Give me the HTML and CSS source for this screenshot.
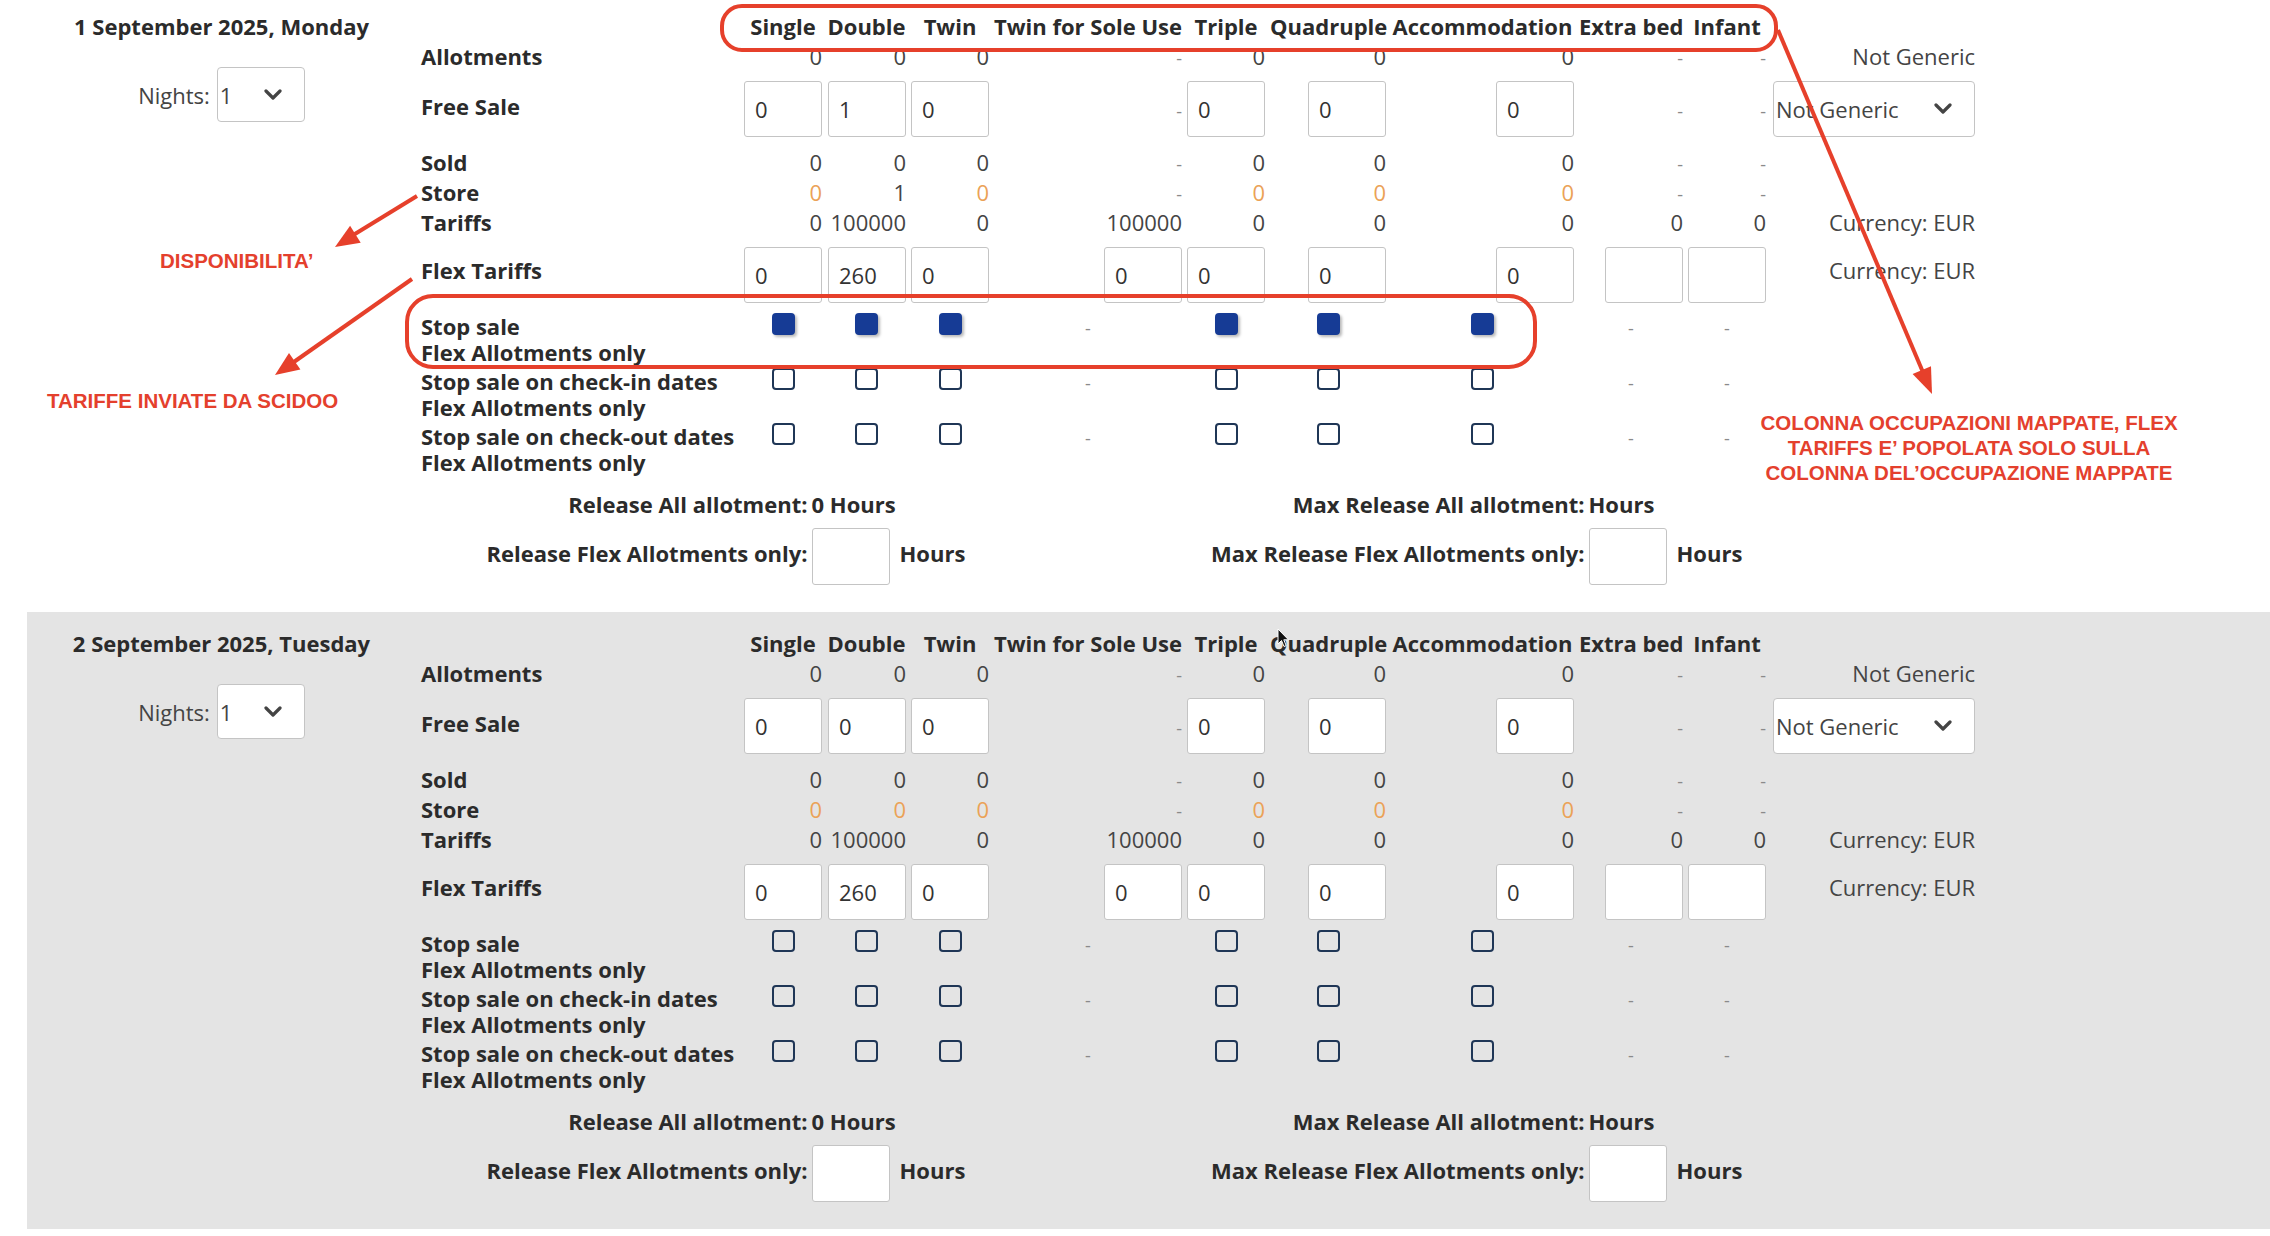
FILE: index.html
```html
<!DOCTYPE html>
<html lang="en">
<head>
<meta charset="UTF-8">
<title>Allotments</title>
<link rel="stylesheet" href="styles.css">
</head>
<body>
<div class="page">
<div class="days">

<!--first day-->
<div class="day">
	<div class="day-side">
		<div class="day-date">1 September 2025, Monday</div>
		<div class="nights">
			<span>Nights:</span>
			<div class="pick pick-nights"><span>1</span><svg class="chev" viewBox="0 0 18 12"><polyline points="2,2 9,9 16,2"/></svg></div>
		</div>
	</div>
	<div class="day-main">
		<table class="grid">
			<colgroup>
				<col class="c-lbl"><col class="c-sgl"><col class="c-dbl"><col class="c-twn"><col class="c-tsu"><col class="c-trp"><col class="c-qd"><col class="c-acc"><col class="c-ext"><col class="c-inf"><col class="c-side">
			</colgroup>
			<tr class="r-head">
				<th></th><th>Single</th><th>Double</th><th>Twin</th><th>Twin for Sole Use</th><th>Triple</th><th>Quadruple</th><th>Accommodation</th><th>Extra bed</th><th>Infant</th><th></th>
			</tr>
			<tr class="r-line">
				<td class="lbl">Allotments</td>
				<td class="n">0</td><td class="n">0</td><td class="n">0</td><td class="n"><span class="d">-</span></td><td class="n">0</td><td class="n">0</td><td class="n">0</td><td class="n"><span class="d">-</span></td><td class="n"><span class="d">-</span></td>
				<td class="n">Not Generic</td>
			</tr>
			<tr class="r-box">
				<td class="lbl">Free Sale</td>
				<td class="n"><input class="box" type="text" value="0"></td>
				<td class="n"><input class="box" type="text" value="1"></td>
				<td class="n"><input class="box" type="text" value="0"></td>
				<td class="n"><span class="d">-</span></td>
				<td class="n"><input class="box" type="text" value="0"></td>
				<td class="n"><input class="box" type="text" value="0"></td>
				<td class="n"><input class="box" type="text" value="0"></td>
				<td class="n"><span class="d">-</span></td><td class="n"><span class="d">-</span></td>
				<td class="n"><div class="pick pick-generic"><span>Not Generic</span><svg class="chev" viewBox="0 0 18 12"><polyline points="2,2 9,9 16,2"/></svg></div></td>
			</tr>
			<tr class="r-line">
				<td class="lbl">Sold</td>
				<td class="n">0</td><td class="n">0</td><td class="n">0</td><td class="n"><span class="d">-</span></td><td class="n">0</td><td class="n">0</td><td class="n">0</td><td class="n"><span class="d">-</span></td><td class="n"><span class="d">-</span></td>
				<td></td>
			</tr>
			<tr class="r-line">
				<td class="lbl">Store</td>
				<td class="n o">0</td><td class="n">1</td><td class="n o">0</td><td class="n"><span class="d">-</span></td><td class="n o">0</td><td class="n o">0</td><td class="n o">0</td><td class="n"><span class="d">-</span></td><td class="n"><span class="d">-</span></td>
				<td></td>
			</tr>
			<tr class="r-line">
				<td class="lbl">Tariffs</td>
				<td class="n">0</td><td class="n">100000</td><td class="n">0</td><td class="n">100000</td><td class="n">0</td><td class="n">0</td><td class="n">0</td><td class="n">0</td><td class="n">0</td>
				<td class="n">Currency: EUR</td>
			</tr>
			<tr class="r-box r-flex">
				<td class="lbl">Flex Tariffs</td>
				<td class="n"><input class="box" type="text" value="0"></td>
				<td class="n"><input class="box" type="text" value="260"></td>
				<td class="n"><input class="box" type="text" value="0"></td>
				<td class="n"><input class="box" type="text" value="0"></td>
				<td class="n"><input class="box" type="text" value="0"></td>
				<td class="n"><input class="box" type="text" value="0"></td>
				<td class="n"><input class="box" type="text" value="0"></td>
				<td class="n"><input class="box" type="text" value=""></td>
				<td class="n"><input class="box" type="text" value=""></td>
				<td class="n side-up">Currency: EUR</td>
			</tr>
			<tr class="r-check">
				<td class="lbl"><div class="ln">Stop sale</div><div class="ln">Flex Allotments only</div></td>
				<td class="c"><span class="cb on"></span></td><td class="c"><span class="cb on"></span></td><td class="c"><span class="cb on"></span></td><td class="c"><span class="d">-</span></td><td class="c"><span class="cb on"></span></td><td class="c"><span class="cb on"></span></td><td class="c"><span class="cb on"></span></td><td class="c"><span class="d">-</span></td><td class="c"><span class="d">-</span></td>
				<td></td>
			</tr>
			<tr class="r-check">
				<td class="lbl"><div class="ln">Stop sale on check-in dates</div><div class="ln">Flex Allotments only</div></td>
				<td class="c"><span class="cb"></span></td><td class="c"><span class="cb"></span></td><td class="c"><span class="cb"></span></td><td class="c"><span class="d">-</span></td><td class="c"><span class="cb"></span></td><td class="c"><span class="cb"></span></td><td class="c"><span class="cb"></span></td><td class="c"><span class="d">-</span></td><td class="c"><span class="d">-</span></td>
				<td></td>
			</tr>
			<tr class="r-check">
				<td class="lbl"><div class="ln">Stop sale on check-out dates</div><div class="ln">Flex Allotments only</div></td>
				<td class="c"><span class="cb"></span></td><td class="c"><span class="cb"></span></td><td class="c"><span class="cb"></span></td><td class="c"><span class="d">-</span></td><td class="c"><span class="cb"></span></td><td class="c"><span class="cb"></span></td><td class="c"><span class="cb"></span></td><td class="c"><span class="d">-</span></td><td class="c"><span class="d">-</span></td>
				<td></td>
			</tr>
		</table>
		<div class="release">
			<div class="rel-half">
				<div class="rel-label">Release All allotment:</div>
				<div class="rel-value">0 Hours</div>
				<div class="rel-label rel-up">Release Flex Allotments only:</div>
				<div class="rel-value"><input class="box box-hours" type="text" value=""><span class="rel-up">Hours</span></div>
			</div>
			<div class="rel-half">
				<div class="rel-label">Max Release All allotment:</div>
				<div class="rel-value">Hours</div>
				<div class="rel-label rel-up">Max Release Flex Allotments only:</div>
				<div class="rel-value"><input class="box box-hours" type="text" value=""><span class="rel-up">Hours</span></div>
			</div>
		</div>
	</div>
</div>

<!--second day, grey row-->
<div class="day day-alt">
	<div class="day-side">
		<div class="day-date">2 September 2025, Tuesday</div>
		<div class="nights">
			<span>Nights:</span>
			<div class="pick pick-nights"><span>1</span><svg class="chev" viewBox="0 0 18 12"><polyline points="2,2 9,9 16,2"/></svg></div>
		</div>
	</div>
	<div class="day-main">
		<table class="grid">
			<colgroup>
				<col class="c-lbl"><col class="c-sgl"><col class="c-dbl"><col class="c-twn"><col class="c-tsu"><col class="c-trp"><col class="c-qd"><col class="c-acc"><col class="c-ext"><col class="c-inf"><col class="c-side">
			</colgroup>
			<tr class="r-head">
				<th></th><th>Single</th><th>Double</th><th>Twin</th><th>Twin for Sole Use</th><th>Triple</th><th>Quadruple</th><th>Accommodation</th><th>Extra bed</th><th>Infant</th><th></th>
			</tr>
			<tr class="r-line">
				<td class="lbl">Allotments</td>
				<td class="n">0</td><td class="n">0</td><td class="n">0</td><td class="n"><span class="d">-</span></td><td class="n">0</td><td class="n">0</td><td class="n">0</td><td class="n"><span class="d">-</span></td><td class="n"><span class="d">-</span></td>
				<td class="n">Not Generic</td>
			</tr>
			<tr class="r-box">
				<td class="lbl">Free Sale</td>
				<td class="n"><input class="box" type="text" value="0"></td>
				<td class="n"><input class="box" type="text" value="0"></td>
				<td class="n"><input class="box" type="text" value="0"></td>
				<td class="n"><span class="d">-</span></td>
				<td class="n"><input class="box" type="text" value="0"></td>
				<td class="n"><input class="box" type="text" value="0"></td>
				<td class="n"><input class="box" type="text" value="0"></td>
				<td class="n"><span class="d">-</span></td><td class="n"><span class="d">-</span></td>
				<td class="n"><div class="pick pick-generic"><span>Not Generic</span><svg class="chev" viewBox="0 0 18 12"><polyline points="2,2 9,9 16,2"/></svg></div></td>
			</tr>
			<tr class="r-line">
				<td class="lbl">Sold</td>
				<td class="n">0</td><td class="n">0</td><td class="n">0</td><td class="n"><span class="d">-</span></td><td class="n">0</td><td class="n">0</td><td class="n">0</td><td class="n"><span class="d">-</span></td><td class="n"><span class="d">-</span></td>
				<td></td>
			</tr>
			<tr class="r-line">
				<td class="lbl">Store</td>
				<td class="n o">0</td><td class="n o">0</td><td class="n o">0</td><td class="n"><span class="d">-</span></td><td class="n o">0</td><td class="n o">0</td><td class="n o">0</td><td class="n"><span class="d">-</span></td><td class="n"><span class="d">-</span></td>
				<td></td>
			</tr>
			<tr class="r-line">
				<td class="lbl">Tariffs</td>
				<td class="n">0</td><td class="n">100000</td><td class="n">0</td><td class="n">100000</td><td class="n">0</td><td class="n">0</td><td class="n">0</td><td class="n">0</td><td class="n">0</td>
				<td class="n">Currency: EUR</td>
			</tr>
			<tr class="r-box r-flex">
				<td class="lbl">Flex Tariffs</td>
				<td class="n"><input class="box" type="text" value="0"></td>
				<td class="n"><input class="box" type="text" value="260"></td>
				<td class="n"><input class="box" type="text" value="0"></td>
				<td class="n"><input class="box" type="text" value="0"></td>
				<td class="n"><input class="box" type="text" value="0"></td>
				<td class="n"><input class="box" type="text" value="0"></td>
				<td class="n"><input class="box" type="text" value="0"></td>
				<td class="n"><input class="box" type="text" value=""></td>
				<td class="n"><input class="box" type="text" value=""></td>
				<td class="n side-up">Currency: EUR</td>
			</tr>
			<tr class="r-check">
				<td class="lbl"><div class="ln">Stop sale</div><div class="ln">Flex Allotments only</div></td>
				<td class="c"><span class="cb"></span></td><td class="c"><span class="cb"></span></td><td class="c"><span class="cb"></span></td><td class="c"><span class="d">-</span></td><td class="c"><span class="cb"></span></td><td class="c"><span class="cb"></span></td><td class="c"><span class="cb"></span></td><td class="c"><span class="d">-</span></td><td class="c"><span class="d">-</span></td>
				<td></td>
			</tr>
			<tr class="r-check">
				<td class="lbl"><div class="ln">Stop sale on check-in dates</div><div class="ln">Flex Allotments only</div></td>
				<td class="c"><span class="cb"></span></td><td class="c"><span class="cb"></span></td><td class="c"><span class="cb"></span></td><td class="c"><span class="d">-</span></td><td class="c"><span class="cb"></span></td><td class="c"><span class="cb"></span></td><td class="c"><span class="cb"></span></td><td class="c"><span class="d">-</span></td><td class="c"><span class="d">-</span></td>
				<td></td>
			</tr>
			<tr class="r-check">
				<td class="lbl"><div class="ln">Stop sale on check-out dates</div><div class="ln">Flex Allotments only</div></td>
				<td class="c"><span class="cb"></span></td><td class="c"><span class="cb"></span></td><td class="c"><span class="cb"></span></td><td class="c"><span class="d">-</span></td><td class="c"><span class="cb"></span></td><td class="c"><span class="cb"></span></td><td class="c"><span class="cb"></span></td><td class="c"><span class="d">-</span></td><td class="c"><span class="d">-</span></td>
				<td></td>
			</tr>
		</table>
		<div class="release">
			<div class="rel-half">
				<div class="rel-label">Release All allotment:</div>
				<div class="rel-value">0 Hours</div>
				<div class="rel-label rel-up">Release Flex Allotments only:</div>
				<div class="rel-value"><input class="box box-hours" type="text" value=""><span class="rel-up">Hours</span></div>
			</div>
			<div class="rel-half">
				<div class="rel-label">Max Release All allotment:</div>
				<div class="rel-value">Hours</div>
				<div class="rel-label rel-up">Max Release Flex Allotments only:</div>
				<div class="rel-value"><input class="box box-hours" type="text" value=""><span class="rel-up">Hours</span></div>
			</div>
		</div>
	</div>
</div>

</div>

<!--red notes drawn over the screenshot-->
<div class="notes">
	<svg class="marks" width="2270" height="1236" viewBox="0 0 2270 1236">
		<rect x="722" y="6" width="1054" height="44" rx="20"/>
		<rect x="407" y="296" width="1128" height="71" rx="26"/>
		<line x1="417" y1="196" x2="350" y2="237"/>
		<polygon points="335,247 360.7,242.8 350.1,225.8"/>
		<line x1="412" y1="279" x2="291" y2="364"/>
		<polygon points="275,375 300.4,369.4 289,353"/>
		<line x1="1778" y1="30" x2="1925" y2="377"/>
		<polygon points="1932,394 1931,366.2 1912.6,374"/>
	</svg>
	<div class="note note-disp">DISPONIBILITA’</div>
	<div class="note note-tariffe">TARIFFE INVIATE DA SCIDOO</div>
	<div class="note note-colonna"><div>COLONNA OCCUPAZIONI MAPPATE, FLEX</div><div>TARIFFS E’ POPOLATA SOLO SULLA</div><div>COLONNA DEL’OCCUPAZIONE MAPPATE</div></div>
	<svg class="cursor" width="14" height="21" viewBox="0 0 14 21"><path d="M1 1 L1 16 L4.5 12.5 L7 18.5 L9.2 17.6 L6.8 11.8 L11.5 11.8 Z"/></svg>
</div>
</div>
</body>
</html>
```

FILE: styles.css
```css
html, body {
	margin: 0;
	padding: 0;
}
body {
	font-family: "Open Sans", sans-serif;
	font-size: 22px;
	color: #2b2b2b;
	background-color: #FFFFFF;
	overflow: hidden;
}
.page {
	position: relative;
	display: flow-root;
	width: 2270px;
	height: 1236px;
	overflow: hidden;
}
.days {
	margin-top: -5px;
}
.day {
	display: flex;
	margin-left: 27px;
	padding: 16px 0 26px 0;
	height: 617px;
	box-sizing: border-box;
}
.day-alt {
	background: #e4e4e4;
}
.day-side {
	flex: none;
	width: 389px;
	text-align: center;
}
.day-date {
	font-weight: 700;
	line-height: 30px;
}
.nights {
	margin-top: 26px;
	display: flex;
	justify-content: center;
	align-items: center;
	gap: 7px;
	color: #444444;
}
.pick {
	display: inline-flex;
	align-items: center;
	justify-content: space-between;
	box-sizing: border-box;
	height: 55px;
	padding: 0 22px 0 2px;
	background: #ffffff;
	border: 1px solid #c4c4c4;
	border-radius: 4px;
	color: #444444;
	text-align: left;
	vertical-align: middle;
}
.pick-nights {
	width: 88px;
}
.pick-generic {
	width: 202px;
	height: 56px;
}
.chev {
	width: 18px;
	height: 12px;
	fill: none;
	stroke: #444444;
	stroke-width: 3.2;
	stroke-linecap: round;
	stroke-linejoin: round;
}
.day-main {
	flex: none;
	width: 1564px;
}

/* the occupancy grid */
.grid {
	border-collapse: separate;
	border-spacing: 5px 0;
	table-layout: fixed;
	width: 1564px;
}
.grid th, .grid td {
	padding: 0;
	white-space: nowrap;
	vertical-align: middle;
}
.c-lbl { width: 318px; }
.c-sgl { width: 78px; }
.c-dbl { width: 79px; }
.c-twn { width: 78px; }
.c-tsu { width: 188px; }
.c-trp { width: 78px; }
.c-qd { width: 116px; }
.c-acc { width: 183px; }
.c-ext { width: 104px; }
.c-inf { width: 78px; }
.c-side { width: 204px; }
.r-head {
	height: 30px;
}
.r-head th {
	font-weight: 700;
	text-align: center;
	line-height: 30px;
	overflow: visible;
}
.r-line {
	height: 30px;
}
.r-line td {
	height: 30px;
	line-height: 30px;
}
.r-box {
	height: 76px;
}
.r-box .lbl {
	padding-bottom: 6px;
}
.r-flex .lbl, .r-flex .side-up {
	padding-bottom: 9px;
}
.r-flex {
	height: 75px;
}
.r-check {
	height: 55px;
}
.r-check td {
	vertical-align: top;
	padding-top: 1px;
	line-height: 26px;
}
.ln {
	height: 26px;
}
.lbl {
	font-weight: 700;
	text-align: left;
}
.n {
	text-align: right;
	color: #444444;
}
.n.o {
	color: #eba257;
}
.c {
	text-align: center;
}
.d {
	color: #8a8a8a;
	font-size: 18px;
	line-height: 1;
}
.box {
	display: inline-block;
	vertical-align: middle;
	box-sizing: border-box;
	width: 78px;
	height: 56px;
	margin: 0;
	padding: 0 0 0 10px;
	font-family: "Open Sans", sans-serif;
	font-size: 22px;
	color: #333333;
	background: #ffffff;
	border: 1px solid #c4c4c4;
	border-radius: 3px;
	outline: none;
}
.cb {
	display: block;
	margin: 0 auto;
	width: 23px;
	height: 22px;
	box-sizing: border-box;
	border: 2px solid #1f3656;
	border-radius: 4px;
}
.cb.on {
	background: #163b95;
	border-color: #163b95;
	box-shadow: 2px 2px 3px rgba(0, 0, 0, 0.28);
}

/* release hours */
.release {
	margin: 12px 5px 0 5px;
	display: grid;
	grid-template-columns: 1fr 1fr;
}
.rel-half {
	display: grid;
	grid-template-columns: 1fr 1fr;
	grid-template-rows: 30px 57px;
	column-gap: 4px;
	row-gap: 9px;
	align-items: center;
	font-weight: 700;
	white-space: nowrap;
}
.rel-label {
	text-align: right;
}
.rel-value {
	display: flex;
	align-items: center;
	gap: 10px;
}
.rel-up {
	padding-bottom: 8px;
}
.box-hours {
	height: 57px;
}

/* red notes */
.notes {
	position: absolute;
	left: 0;
	top: 0;
	width: 2270px;
	height: 1236px;
	pointer-events: none;
}
.marks {
	position: absolute;
	left: 0;
	top: 0;
}
.marks rect, .marks line {
	fill: none;
	stroke: #e6402b;
	stroke-width: 4;
}
.marks polygon {
	fill: #e6402b;
}
.note {
	position: absolute;
	color: #e4402d;
	font-family: "Liberation Sans", Arial, sans-serif;
	font-weight: 700;
	font-size: 20.5px;
	line-height: 25px;
	white-space: nowrap;
}
.note-disp {
	left: 160px;
	top: 248px;
}
.note-tariffe {
	left: 47px;
	top: 388px;
}
.note-colonna {
	left: 1669px;
	top: 410px;
	width: 600px;
	text-align: center;
}
.cursor {
	position: absolute;
	left: 1277px;
	top: 628px;
}
.cursor path {
	fill: #111111;
	stroke: #ffffff;
	stroke-width: 1;
}
```
